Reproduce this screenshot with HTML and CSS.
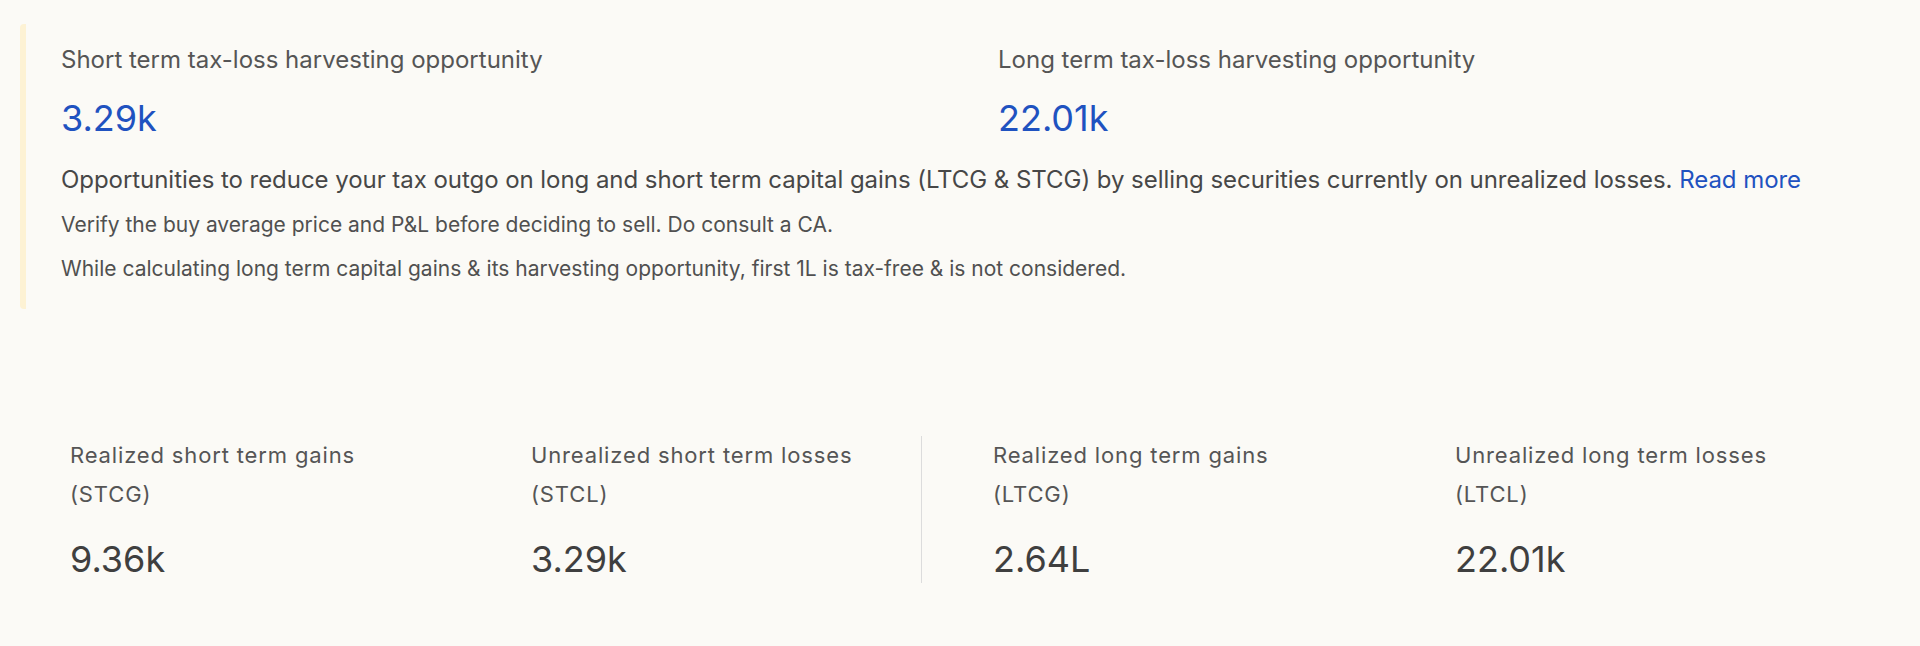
FILE: index.html
```html
<!DOCTYPE html>
<html lang="en">
<head>
<meta charset="utf-8">
<title>Tax-loss harvesting</title>
<link rel="stylesheet" href="styles.css">
</head>
<body>
<main class="page">
  <section class="harvest">
    <div class="harvest__grid">
      <div class="harvest__item">
        <div class="harvest__label">Short term tax-loss harvesting opportunity</div>
        <div class="harvest__value">3.29k</div>
      </div>
      <div class="harvest__item">
        <div class="harvest__label">Long term tax-loss harvesting opportunity</div>
        <div class="harvest__value">22.01k</div>
      </div>
    </div>
    <p class="harvest__desc">Opportunities to reduce your tax outgo on long and short term capital gains (LTCG &amp; STCG) by selling securities currently on unrealized losses. <a class="link" href="#">Read more</a></p>
    <p class="harvest__note">Verify the buy average price and P&amp;L before deciding to sell. Do consult a CA.</p>
    <p class="harvest__note">While calculating long term capital gains &amp; its harvesting opportunity, first 1L is tax-free &amp; is not considered.</p>
  </section>

  <section class="stats">
    <div class="stat">
      <div class="stat__label">Realized short term gains (STCG)</div>
      <div class="stat__value">9.36k</div>
    </div>
    <div class="stat">
      <div class="stat__label">Unrealized short term losses (STCL)</div>
      <div class="stat__value">3.29k</div>
    </div>
    <div class="stat stat--divided">
      <div class="stat__label">Realized long term gains (LTCG)</div>
      <div class="stat__value">2.64L</div>
    </div>
    <div class="stat">
      <div class="stat__label">Unrealized long term losses (LTCL)</div>
      <div class="stat__value">22.01k</div>
    </div>
  </section>
</main>
</body>
</html>
```

FILE: styles.css
```css
* { box-sizing: border-box; }

html, body {
  margin: 0;
  padding: 0;
  background: #fbfaf6;
}

body {
  font-family: Inter, "Noto Sans", sans-serif;
  color: #4b4b4b;
  width: 1920px;
  height: 646px;
  overflow: hidden;
}

.page {
  padding-top: 24px;
}

.harvest {
  margin-left: 20px;
  margin-right: 20px;
  border-left: 6px solid #fdf2d4;
  border-radius: 4px;
  padding: 18px 35px 18px 35px;
}

.harvest__grid {
  display: grid;
  grid-template-columns: 937px 1fr;
}

.harvest__label {
  font-size: 24px;
  line-height: 36px;
  color: #555;
}

.harvest__value {
  margin-top: 16px;
  font-size: 36px;
  line-height: 48px;
  color: #1f52c0;
}

.harvest__desc {
  margin: 20px 0 5px;
  font-size: 24px;
  line-height: 36px;
  letter-spacing: -0.05px;
  color: #474747;
}

.harvest__note {
  margin: 0;
  font-size: 21px;
  line-height: 44px;
  color: #505050;
}

.link {
  color: #1f52c0;
  text-decoration: none;
}

.stats {
  margin-top: 127px;
  padding-left: 70px;
  display: grid;
  grid-template-columns: 461px 390px 534px 1fr;
}

.stat--divided {
  border-left: 1px solid #dcdcdc;
  padding-left: 71px;
}

.stat__label {
  max-width: 330px;
  font-size: 22px;
  line-height: 39px;
  letter-spacing: 0.85px;
  color: #555;
}

.stat__value {
  margin-top: 21px;
  font-size: 36px;
  line-height: 48px;
  color: #3f3f3f;
}
```
